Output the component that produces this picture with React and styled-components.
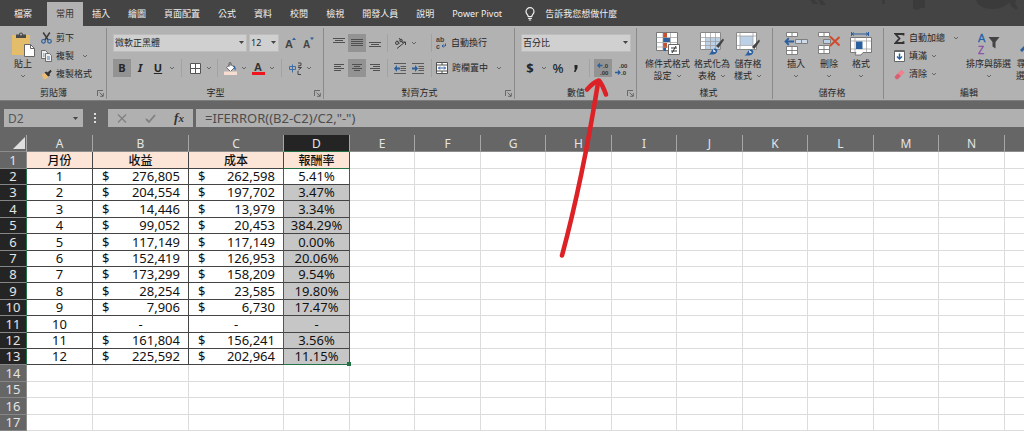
import React, { useEffect, useState } from 'react';
import styled, { createGlobalStyle, css } from 'styled-components';

const GlobalStyle = createGlobalStyle`
  *, *::before, *::after {
    box-sizing: border-box;
  }
  body {
    margin: 0;
    background: #fff;
    color: #262626;
    font-family: "Noto Sans", "Noto Sans CJK TC", sans-serif;
    font-size: 9px;
    line-height: 12px;
  }
  button, input, select {
    margin: 0;
    padding: 0;
    border: none;
    border-radius: 0;
    background: transparent;
    color: inherit;
    font: inherit;
  }
  svg {
    display: block;
    flex: none;
  }
`;

const Page = styled.div`
  position: relative;
  display: flex;
  flex-direction: column;
  height: 100vh;
  overflow: hidden;
`;

/* ---------- tabs ---------- */

const TabBar = styled.nav`
  display: flex;
  align-items: flex-end;
  height: 26px;
  padding-left: 5px;
  background: #444;
  color: #f0f0f0;
`;

const Tab = styled.button`
  height: 24px;
  padding: 0 9px;
  white-space: nowrap;
  ${props => props.$file && css`
    margin-right: 6px;
  `}
  ${props => props.$active && css`
    background: #b2b2b2;
    color: #333;
  `}
`;

const TellMe = styled.button`
  display: flex;
  align-items: center;
  gap: 10px;
  height: 24px;
  padding: 0 14px;
  white-space: nowrap;
`;

const TitleArt = styled.svg`
  align-self: flex-start;
  margin-left: auto;
`;

/* ---------- ribbon ---------- */

const RibbonBar = styled.div`
  display: flex;
  height: 75px;
  padding-top: 2px;
  background: #b2b2b2;
  border-bottom: 1px solid #7c7c7c;
  overflow: hidden;
`;

const Group = styled.section`
  display: flex;
  flex: none;
  flex-direction: column;
  justify-content: space-between;
  width: ${props => props.$width};
  margin-bottom: 1px;
  border-right: ${props => (props.$last ? 'none' : '1px solid #8a8a8a')};
`;

const GroupBody = styled.div`
  display: flex;
  gap: ${props => props.$gap || '0'};
  padding: 0 ${props => props.$pad || '6px'};
`;

const GroupFooter = styled.div`
  display: flex;
  align-items: center;
  height: 12px;
  padding: 0 2px 0 10px;
`;

const GroupName = styled.h2`
  flex: 1;
  margin: 0;
  font-size: 9px;
  font-weight: 400;
  text-align: center;
`;

const Stack = styled.div`
  display: flex;
  flex-direction: column;
  padding-top: 1px;
`;

const TwoRows = styled.div`
  display: flex;
  flex-direction: column;
  gap: 7px;
  padding-top: 6px;
`;

const Row = styled.div`
  display: flex;
  align-items: center;
  gap: ${props => props.$gap || '0'};
  width: ${props => props.$width || 'auto'};
  height: 18px;
`;

const SmallButton = styled.button`
  display: flex;
  align-items: center;
  gap: 4px;
  height: 18px;
  white-space: nowrap;
`;

const IconButton = styled.button`
  display: flex;
  align-items: center;
  justify-content: center;
  width: 18px;
  height: 18px;
  background: ${props => (props.$on ? '#939393' : 'transparent')};
`;

const ArrowButton = styled.button`
  display: flex;
  align-items: center;
  justify-content: center;
  width: 10px;
  height: 18px;
`;

const Divider = styled.span`
  width: 1px;
  height: 18px;
  margin: 0 ${props => (props.$tight ? '3px' : '4px')};
  background: #a2a2a2;
`;

const BigButton = styled.button`
  display: flex;
  flex: none;
  flex-direction: column;
  align-items: center;
  padding-top: 4px;
  white-space: nowrap;
`;

const BigLabel = styled.span`
  display: flex;
  align-items: center;
  justify-content: center;
  gap: 4px;
  min-height: 12px;
`;

const BigIcon = styled.span`
  display: flex;
  justify-content: center;
  height: 26px;
`;

const FormatLetter = styled.span`
  font-size: ${props => (props.$big ? '13px' : '11px')};
  line-height: 16px;
  font-weight: ${props => (props.$bold ? 700 : 500)};
  font-style: ${props => (props.$italic ? 'italic' : 'normal')};
  text-decoration: ${props => (props.$underline ? 'underline' : 'none')};
`;

const SelectBox = styled.label`
  position: relative;
  display: block;
  width: ${props => props.$width};
  height: 18px;
  svg {
    position: absolute;
    right: 3px;
    top: 7px;
    pointer-events: none;
  }
`;

const Select = styled.select`
  width: 100%;
  height: 100%;
  padding: 0 1px;
  appearance: none;
  background: #d0d0d0;
  border: 1px solid #bdbdbd;
`;

/* ---------- formula bar ---------- */

const FormulaRow = styled.div`
  display: flex;
  padding: 8px 0 8px 4px;
  background: #666;
`;

const NameBox = styled.label`
  display: flex;
  align-items: center;
  width: 79px;
  height: 18px;
  padding: 0 5px 0 4px;
  background: #b0b0b0;
  color: #555;
`;

const NameInput = styled.input`
  flex: 1;
  min-width: 0;
  font-size: 12px;
`;

const Grip = styled.svg`
  margin: 4px 11px;
`;

const FormulaTools = styled.div`
  display: flex;
  align-items: center;
  justify-content: space-around;
  width: 85px;
  height: 18px;
  background: #b0b0b0;
`;

const FunctionButton = styled.button`
  color: #333;
  font-family: "Liberation Serif", serif;
  font-size: 13px;
  font-style: italic;
  font-weight: 700;
  small {
    font-size: 11px;
  }
`;

const FormulaInput = styled.input`
  flex: 1;
  min-width: 0;
  height: 18px;
  margin-left: 3px;
  padding: 0 9px;
  background: #b0b0b0;
  color: #4c4c4c;
  font-size: 13px;
`;

/* ---------- sheet ---------- */

const SheetArea = styled.main`
  flex: 1;
  min-height: 0;
  overflow: hidden;
`;

const Sheet = styled.table`
  width: max-content;
  table-layout: fixed;
  border-collapse: separate;
  border-spacing: 0;
  font-size: 13px;
  line-height: 15px;
  color: #111;
`;

const Col = styled.col`
  width: ${props => props.$width}px;
`;

const SheetRow = styled.tr`
  height: 16px;
  &:nth-child(5n + 1), &:nth-child(5n + 4) {
    height: 17px;
  }
`;

const ColHead = styled.th`
  height: 17px;
  padding: 0;
  background: ${props => (props.$selected ? '#242424' : '#666')};
  border-right: 1px solid #a6a6a6;
  border-bottom: 1px solid ${props => (props.$selected ? '#217346' : '#8c8c8c')};
  color: #e4e4e4;
  font-size: 12px;
  font-weight: 400;
`;

const Corner = styled.th`
  padding: 0;
  background: #666;
  border-right: 1px solid #a6a6a6;
  border-bottom: 1px solid #8c8c8c;
  svg {
    margin: 0 1px 0 auto;
  }
`;

const RowHead = styled.th`
  padding: 0;
  background: ${props => (props.$selected ? '#242424' : '#666')};
  border-right: 1px solid ${props => (props.$selected ? '#217346' : '#8c8c8c')};
  border-bottom: 1px solid #868686;
  color: #e4e4e4;
  font-weight: 400;
`;

const lineColor = { plain: '#dcdcdc', dark: '#444', green: '#217346' };

const Cell = styled.td`
  position: relative;
  padding: 0;
  background: ${props => props.$fill || '#fff'};
  border-right: 1px solid ${props => lineColor[props.$right || 'plain']};
  border-bottom: 1px solid ${props => lineColor[props.$bottom || 'plain']};
  font-size: ${props => (props.$title ? '12px' : '13px')};
  font-weight: ${props => (props.$title ? 500 : 400)};
  text-align: center;
`;

const Money = styled.span`
  display: flex;
  justify-content: space-between;
  padding: 0 8px 0 9px;
`;

const FillHandle = styled.span`
  position: absolute;
  right: -2px;
  bottom: -2px;
  z-index: 1;
  width: 4px;
  height: 4px;
  background: #217346;
`;

const RedArrow = styled.svg`
  position: absolute;
  left: 550px;
  top: 70px;
  pointer-events: none;
`;

/* ---------- icons ---------- */

const IconText = styled.text`
  font-family: "Liberation Sans", sans-serif;
  font-size: ${props => props.$size}px;
  font-weight: ${props => (props.$bold ? 700 : 400)};
`;

const Chevron = () => (
  <svg width="6" height="4" viewBox="0 0 6 4" fill="none" stroke="#666">
    <path d="M1 1l2 2 2-2" />
  </svg>
);

const Caret = () => (
  <svg width="5" height="3" viewBox="0 0 5 3"><path d="M0 0h5L2.500 3z" fill="#444" /></svg>
);

const Launcher = () => (
  <svg width="7" height="7" viewBox="0 0 7 7" fill="none" stroke="#555" strokeWidth=".8">
    <path d="M.5 6V.5H6M2.500 2.500l3.500 3.500M6.300 3v3.300H3" />
  </svg>
);

const BulbIcon = () => (
  <svg width="10" height="14" viewBox="0 0 10 14" fill="none" stroke="#f0f0f0" strokeWidth="1.200">
    <path d="M3.200 9.500C3.200 7.700 1 7 1 4.700a4 4 0 0 1 8 0C9 7 6.800 7.700 6.800 9.500zM3.200 11.300h3.600M3.800 13h2.400" />
  </svg>
);

const PasteIcon = () => (
  <svg width="24" height="25" viewBox="0 0 24 25">
    <path d="M1 3h18v20H1z" fill="#e3bd6a" />
    <path d="M5 6V2.500h3a2 2 0 0 1 4 0h3V6z" fill="#4a4a4a" />
    <circle cx="10" cy="2.500" r="1" fill="#b2b2b2" />
    <path d="M13.500 12.500h6l4 4v8h-10z" fill="#fff" stroke="#666" />
    <path d="M19.500 12.500v4h4" fill="none" stroke="#666" />
  </svg>
);

const CutIcon = () => (
  <svg width="11" height="12" viewBox="0 0 11 12" fill="none">
    <path d="M2.200.5l5 7.500M8.800.5l-5 7.500" stroke="#3c3c3c" strokeWidth="1.500" />
    <circle cx="2.500" cy="9.300" r="1.800" stroke="#2b5f9e" strokeWidth="1.200" />
    <circle cx="8.500" cy="9.300" r="1.800" stroke="#2b5f9e" strokeWidth="1.200" />
  </svg>
);

const CopyIcon = () => (
  <svg width="11" height="12" viewBox="0 0 11 12" fill="#eee" stroke="#555" strokeWidth=".8">
    <path d="M.5.5h4l2 2v6h-6z" />
    <path d="M4.500 3.500h4l2 2v6h-6z" />
    <path d="M6 7h3M6 9h3M2 4h1.500M2 6h1.500" stroke="#2b5f9e" />
  </svg>
);

const BrushIcon = () => (
  <svg width="11" height="11" viewBox="0 0 11 11">
    <path d="M.5 5.500l4-1.500 3 4.500L3 10.500z" fill="#edbd72" />
    <path d="M3.500 3.500l2-1 1 1L9.500.8l1.200 1.400L8.500 5l.5 1.500-1.800 1z" fill="#333" />
  </svg>
);

const GrowFont = () => (
  <svg width="13" height="14" viewBox="0 0 13 14">
    <IconText x="1" y="12" $size={11} $bold fill="#444">A</IconText>
    <path d="M8 4l2-2.500L12 4z" fill="#2b5f9e" />
  </svg>
);

const ShrinkFont = () => (
  <svg width="13" height="14" viewBox="0 0 13 14">
    <IconText x="1" y="12" $size={10} $bold fill="#444">A</IconText>
    <path d="M8 1.500h4L10 4z" fill="#2b5f9e" />
  </svg>
);

const BorderIcon = () => (
  <svg width="11" height="11" viewBox="0 0 11 11">
    <path d="M.5.5h10v10H.5z" fill="#fff" stroke="#555" />
    <path d="M5.500 1v9M1 5.500h9" stroke="#555" />
  </svg>
);

const FillIcon = () => (
  <svg width="13" height="13" viewBox="0 0 13 13">
    <path d="M2.500 5.500l4-3.500 4 3.500-4 4z" fill="#fff" stroke="#555" strokeWidth=".8" />
    <path d="M5 5V1.500a1 1 0 0 1 2 0V4" fill="none" stroke="#555" strokeWidth=".8" />
    <path d="M9 3.500c2 0 3 1.500 2.600 5-1.200-.5-1.200-2.500-2.600-5z" fill="#2b5f9e" />
    <path d="M0 9.500h13V13H0z" fill="#f6ddd0" />
  </svg>
);

const FontColorIcon = () => (
  <svg width="13" height="14" viewBox="0 0 13 14">
    <IconText x="2" y="10" $size={11} $bold fill="#333">A</IconText>
    <path d="M0 11h13v3H0z" fill="#f0141c" />
  </svg>
);

const PhoneticIcon = () => (
  <svg width="13" height="13" viewBox="0 0 13 13">
    <path d="M.5 4.500h6v3h-6zM3.500 2.500v8" fill="none" stroke="#3d6da6" />
    <path d="M9 1h3v2.500M9 4l3-.5M9 5.500h3.500L9.500 8M9 9v3.500h3" fill="none" stroke="#444" />
  </svg>
);

// horizontal bars, one [x, width] pair per line
const Lines = ({ bars, size = 12, top = 2 }) => (
  <svg width={size} height="12" viewBox={`0 0 ${size} 12`} fill="#505050">
    {bars.map(([x, w], i) => <rect key={i} x={x} y={top + i * 2} width={w} height="1" />)}
  </svg>
);

const OrientationIcon = () => (
  <svg width="13" height="12" viewBox="0 0 13 12" fill="none" stroke="#404040">
    <circle cx="3" cy="6" r="1.500" />
    <path d="M3 3.500l2.500 3M5 1l4 5" />
    <circle cx="7" cy="3.500" r="1.300" />
    <path d="M3 11.500l8-6.500M8.500 5h3v3" />
  </svg>
);

const IndentIcon = ({ right }) => (
  <svg width="12" height="11" viewBox="0 0 12 11">
    <path d="M0 .5h12M6.500 3.500H12M6.500 5.500H12M6.500 7.500H12M0 10.500h12" stroke="#5a5a5a" />
    <path d={right ? 'M6 5.500L3 2v2.500H0v2h3V9z' : 'M0 5.500L3 2v2.500h3v2H3V9z'} fill="#2b5f9e" />
  </svg>
);

const WrapIcon = () => (
  <svg width="11" height="14" viewBox="0 0 11 14">
    <IconText x="0" y="6" $size={7} $bold fill="#444">ab</IconText>
    <IconText x="0" y="13" $size={7} $bold fill="#444">c</IconText>
    <path d="M9.500 7.500V10H6M7.500 8.500L6 10l1.500 1.500" fill="none" stroke="#2b5f9e" />
  </svg>
);

const MergeIcon = () => (
  <svg width="12" height="12" viewBox="0 0 12 12">
    <path d="M.5.5h11v11H.5z" fill="#fff" stroke="#505050" />
    <path d="M.5 3h11M.5 9h11M6 .5V3M6 9v2.500" stroke="#505050" />
    <path d="M2.500 6h7M4 4.500L2.500 6 4 7.500M8 4.500L9.500 6 8 7.500" fill="none" stroke="#2b5f9e" />
  </svg>
);

const DecimalIcon = ({ more }) => (
  <svg width="14" height="15" viewBox="0 0 14 15" fill="#333">
    <IconText x={more ? 7 : 5} y="7" $size={6} $bold>{more ? '.0' : '.00'}</IconText>
    <IconText x={more ? 4 : 7} y="14" $size={6} $bold>{more ? '.00' : '.0'}</IconText>
    {more
      ? <path d="M6.500 4.500H2M4 2.500l-2 2 2 2" fill="none" stroke="#2b5f9e" strokeWidth="1.300" />
      : <path d="M1 11.500h5M4 9.500l2 2-2 2" fill="none" stroke="#2b5f9e" strokeWidth="1.300" />}
  </svg>
);

const ConditionalIcon = () => (
  <svg width="24" height="23" viewBox="0 0 24 23">
    <path d="M.5.500h21v18H.5z" fill="#fff" stroke="#777" />
    <path d="M7 1h4v5H7zM7 11h4v5H7z" fill="#c8502e" />
    <path d="M7 6h7v4H7zM7 16h3v3H7z" fill="#2b5f9e" />
    <path d="M.5 5.500h21M.5 10.500h21M.5 15h21M7 1v18M14.500 1v18" stroke="#999" strokeWidth=".7" fill="none" />
    <path d="M12.500 12.500h11v10h-11z" fill="#fff" stroke="#666" />
    <path d="M15 16h6M15 19h6M20 14l-4 7" stroke="#333" />
  </svg>
);

const FormatTableIcon = () => (
  <svg width="24" height="23" viewBox="0 0 24 23">
    <path d="M.5.500h20v17H.5z" fill="#fff" stroke="#888" />
    <path d="M6 6h14v11H6z" fill="#bcd0e6" />
    <path d="M.5 5.500h20M.5 9.500h20M.5 13.500h20M5.500 1v16M10.500 1v16M15.500 1v16" stroke="#999" strokeWidth=".7" fill="none" />
    <path d="M23 6.500l1 1.500-5.500 8-2.500-2z" fill="#444" />
    <path d="M8 22.500c3 0 3-5 6.500-6 2 0 3.500 1.500 2.500 3.500-.7 1.500-2 2.500-4 2.500z" fill="#2b5f9e" />
    <path d="M13 17l3 2.500-2.500.5z" fill="#fff" />
  </svg>
);

const CellStyleIcon = () => (
  <svg width="24" height="24" viewBox="0 0 24 24">
    <path d="M.5.500h20v17H.5z" fill="#fff" stroke="#888" />
    <path d="M4 4h13v9H4z" fill="#bcd0e6" />
    <path d="M.5 4h20M.5 13.500h20M4 1v17M17 1v17" stroke="#999" strokeWidth=".7" fill="none" />
    <path d="M23 7.500l1 1.500-5.500 8-2.500-2z" fill="#444" />
    <path d="M8 23.500c3 0 3-5 6.500-6 2 0 3.500 1.500 2.500 3.500-.7 1.500-2 2.500-4 2.500z" fill="#2b5f9e" />
    <path d="M13 18l3 2.500-2.500.5z" fill="#fff" />
  </svg>
);

const InsertIcon = () => (
  <svg width="24" height="23" viewBox="0 0 24 23" fill="#fff" stroke="#777" strokeWidth=".9">
    <path d="M2.500.500h11v4h-11zM8 .5v4M2.500 14.500h11v8h-11zM8 14.500v8M2.500 18.500h11" />
    <path d="M11.500 7.500h12v4h-12zM17.500 7.500v4" fill="#cddbea" />
    <path d="M10 9.500H1.500M4.800 6.200L1.500 9.500l3.300 3.300" fill="none" stroke="#2b5f9e" strokeWidth="1.800" />
  </svg>
);

const DeleteIcon = () => (
  <svg width="24" height="23" viewBox="0 0 24 23" fill="#fff" stroke="#777" strokeWidth=".9">
    <path d="M1.500.500h11v4h-11zM7 .5v4M1.500 13.500h11v8h-11zM7 13.500v8M1.500 17.500h11" />
    <path d="M6.500 7.500h7v4h-7z" fill="#bcd0e6" />
    <path d="M13 4.500l9.500 9M22.500 5l-9.500 9" fill="none" stroke="#d0492b" strokeWidth="1.900" />
  </svg>
);

const FormatIcon = () => (
  <svg width="22" height="24" viewBox="0 0 22 24">
    <path d="M2 2h16M4 .5L2 2l2 1.500M16 .5L18 2l-2 1.500M1.500 0v4M18.500 0v4" fill="none" stroke="#2b5f9e" />
    <path d="M.5 5.500h21v15H13l-2 2.500H5l1-2.500H.5z" fill="#fff" stroke="#777" />
    <path d="M.5 9h21M.5 17h21M5 5.500v15M16.500 5.500v15" stroke="#999" strokeWidth=".7" fill="none" />
    <path d="M6 9.500h6.500V17H6z" fill="#2b5f9e" />
  </svg>
);

const SigmaIcon = () => (
  <svg width="11" height="11" viewBox="0 0 11 11" fill="none" stroke="#333" strokeWidth="1.800">
    <path d="M9.500 2.500V1H1.500l4 4.500-4 4.500h8V8.300" />
  </svg>
);

const FillDownIcon = () => (
  <svg width="11" height="12" viewBox="0 0 11 12">
    <path d="M.5.500h10v11H.5z" fill="#fff" stroke="#666" />
    <path d="M.5 1.500h10" stroke="#666" />
    <path d="M5.500 3.500v5.500M3 6.500L5.500 9 8 6.500" fill="none" stroke="#2b5f9e" strokeWidth="1.500" />
  </svg>
);

const EraserIcon = () => (
  <svg width="11" height="11" viewBox="0 0 11 11">
    <path d="M7.500.8L10.500 3.500 7 7 3.500 4.500z" fill="#f0808c" />
    <path d="M3.500 4.500L7 7 3.700 10.200H2L.5 8z" fill="#dc5c70" />
  </svg>
);

const SortIcon = () => (
  <svg width="22" height="24" viewBox="0 0 22 24">
    <IconText x="0" y="10" $size={11} fill="#1f62ab" stroke="#1f62ab" strokeWidth=".3">A</IconText>
    <IconText x="0" y="22" $size={10} fill="#8a4fa8" stroke="#8a4fa8" strokeWidth=".3">Z</IconText>
    <path d="M10.500 5h11l-4 5v6.500l-3-2V10z" fill="#444" />
  </svg>
);

const FindIcon = () => (
  <svg width="20" height="23" viewBox="0 0 20 23" fill="none" stroke="#2b5f9e">
    <circle cx="12" cy="8" r="6" strokeWidth="2" />
    <path d="M7.500 12.500L1 19" strokeWidth="3" />
  </svg>
);

/* ---------- data ---------- */

const tabs = ['插入', '繪圖', '頁面配置', '公式', '資料', '校閱', '檢視', '開發人員', '說明', 'Power Pivot'];

const letters = 'ABCDEFGHIJKLMNOPQRSTUVWXYZ'.split('');
const firstWidths = [66, 96, 95, 66];
const columnWidth = i => firstWidths[i] || (i % 2 ? 66 : 65);

const records = [
  ['1', '276,805', '262,598', '5.41%'],
  ['2', '204,554', '197,702', '3.47%'],
  ['3', '14,446', '13,979', '3.34%'],
  ['4', '99,052', '20,453', '384.29%'],
  ['5', '117,149', '117,149', '0.00%'],
  ['6', '152,419', '126,953', '20.06%'],
  ['7', '173,299', '158,209', '9.54%'],
  ['8', '28,254', '23,585', '19.80%'],
  ['9', '7,906', '6,730', '17.47%'],
  ['10', '-', '-', '-'],
  ['11', '161,804', '156,241', '3.56%'],
  ['12', '225,592', '202,964', '11.15%'],
];

// how much of the grid is needed to cover the window
const gridSize = () => ({
  rows: Math.max(13, Math.ceil((window.innerHeight - 152) / 17)),
  cols: Math.min(26, Math.max(5, 5 + Math.ceil((window.innerWidth - 416) / 66))),
});

const RibbonGroup = ({ name, width, pad, gap, launcher, last, children }) => (
  <Group $width={width} $last={last}>
    <GroupBody $pad={pad} $gap={gap}>{children}</GroupBody>
    <GroupFooter>
      <GroupName>{name}</GroupName>
      {launcher && <button type="button" aria-label={name}><Launcher /></button>}
    </GroupFooter>
  </Group>
);

const Big = ({ icon, lines, arrow }) => (
  <BigButton type="button">
    <BigIcon>{icon}</BigIcon>
    <BigLabel>{lines[0]}</BigLabel>
    <BigLabel>{lines[1]}{arrow && <Chevron />}</BigLabel>
  </BigButton>
);

const Arrow = ({ label }) => (
  <ArrowButton type="button" aria-label={label}><Chevron /></ArrowButton>
);

const Ribbon = () => (
  <RibbonBar>
    <RibbonGroup name="剪貼簿" width="107px" pad="11px" gap="6px" launcher>
      <Big icon={<PasteIcon />} lines={['貼上', '']} arrow />
      <Stack>
        <SmallButton type="button"><CutIcon />剪下</SmallButton>
        <Row $gap="6px">
          <SmallButton type="button"><CopyIcon />複製</SmallButton>
          <Arrow label="複製選項" />
        </Row>
        <SmallButton type="button"><BrushIcon />複製格式</SmallButton>
      </Stack>
    </RibbonGroup>

    <RibbonGroup name="字型" width="217px" launcher>
      <TwoRows>
        <Row $gap="2px">
          <SelectBox $width="134px">
            <Select aria-label="字型" defaultValue="微軟正黑體"><option>微軟正黑體</option></Select>
            <Caret />
          </SelectBox>
          <SelectBox $width="30px">
            <Select aria-label="字型大小" defaultValue="12"><option>12</option></Select>
            <Caret />
          </SelectBox>
          <Row>
            <IconButton type="button" aria-label="放大字型"><GrowFont /></IconButton>
            <IconButton type="button" aria-label="縮小字型"><ShrinkFont /></IconButton>
          </Row>
        </Row>
        <Row>
          <IconButton type="button" $on><FormatLetter $bold>B</FormatLetter></IconButton>
          <IconButton type="button"><FormatLetter $bold $italic>I</FormatLetter></IconButton>
          <IconButton type="button"><FormatLetter $bold $underline>U</FormatLetter></IconButton>
          <Arrow label="底線" />
          <Divider />
          <IconButton type="button" aria-label="框線"><BorderIcon /></IconButton>
          <Arrow label="框線選項" />
          <Divider $tight />
          <IconButton type="button" aria-label="填滿色彩"><FillIcon /></IconButton>
          <Arrow label="填滿色彩選項" />
          <IconButton type="button" aria-label="字型色彩"><FontColorIcon /></IconButton>
          <Arrow label="字型色彩選項" />
          <Divider />
          <IconButton type="button" aria-label="注音"><PhoneticIcon /></IconButton>
          <Arrow label="注音選項" />
        </Row>
      </TwoRows>
    </RibbonGroup>

    <RibbonGroup name="對齊方式" width="191px" launcher>
      <TwoRows>
        <Row>
          <IconButton type="button" aria-label="靠上"><Lines top={1} bars={[[0, 12], [2, 8], [0, 12]]} /></IconButton>
          <IconButton type="button" aria-label="置中對齊" $on><Lines bars={[[0, 12], [0, 12], [0, 12], [0, 12]]} /></IconButton>
          <IconButton type="button" aria-label="靠下"><Lines top={5} bars={[[0, 12], [2, 8], [0, 12]]} /></IconButton>
          <Divider $tight />
          <Row $width="36px">
            <IconButton type="button" aria-label="方向"><OrientationIcon /></IconButton>
            <Arrow label="方向選項" />
          </Row>
          <Divider />
          <SmallButton type="button"><WrapIcon />自動換行</SmallButton>
        </Row>
        <Row>
          <IconButton type="button" aria-label="靠左"><Lines size={10} bars={[[0, 10], [0, 7], [0, 10], [0, 7]]} /></IconButton>
          <IconButton type="button" aria-label="置中" $on><Lines size={10} bars={[[0, 10], [2, 6], [0, 10], [2, 6]]} /></IconButton>
          <IconButton type="button" aria-label="靠右"><Lines size={10} bars={[[0, 10], [3, 7], [0, 10], [3, 7]]} /></IconButton>
          <Divider $tight />
          <IconButton type="button" aria-label="減少縮排"><IndentIcon /></IconButton>
          <IconButton type="button" aria-label="增加縮排"><IndentIcon right /></IconButton>
          <Divider />
          <Row $gap="6px">
            <SmallButton type="button"><MergeIcon />跨欄置中</SmallButton>
            <Arrow label="跨欄置中選項" />
          </Row>
        </Row>
      </TwoRows>
    </RibbonGroup>

    <RibbonGroup name="數值" width="122px" launcher>
      <TwoRows>
        <SelectBox $width="110px">
          <Select aria-label="數值格式" defaultValue="百分比"><option>百分比</option></Select>
          <Caret />
        </SelectBox>
        <Row>
          <IconButton type="button"><FormatLetter $big $bold>$</FormatLetter></IconButton>
          <Arrow label="會計格式" />
          <IconButton type="button"><FormatLetter $big>%</FormatLetter></IconButton>
          <IconButton type="button" aria-label="千分位樣式">
            <svg width="4" height="7" viewBox="0 0 4 7"><path d="M.5 0H3.500v3L1.500 7H0l1-3.500H.5z" fill="#262626" /></svg>
          </IconButton>
          <Divider />
          <IconButton type="button" aria-label="增加小數位數" $on><DecimalIcon more /></IconButton>
          <IconButton type="button" aria-label="減少小數位數"><DecimalIcon /></IconButton>
        </Row>
      </TwoRows>
    </RibbonGroup>

    <RibbonGroup name="樣式" width="136px" pad="8px" gap="4px">
      <Big icon={<ConditionalIcon />} lines={['條件式格式', '設定']} arrow />
      <Big icon={<FormatTableIcon />} lines={['格式化為', '表格']} arrow />
      <Big icon={<CellStyleIcon />} lines={['儲存格', '樣式']} arrow />
    </RibbonGroup>

    <RibbonGroup name="儲存格" width="111px" pad="11px" gap="9px">
      <Big icon={<InsertIcon />} lines={['插入', '']} arrow />
      <Big icon={<DeleteIcon />} lines={['刪除', '']} arrow />
      <Big icon={<FormatIcon />} lines={['格式', '']} arrow />
    </RibbonGroup>

    <RibbonGroup name="編輯" width="162px" pad="10px" gap="5px" last>
      <Stack>
        <Row $gap="6px">
          <SmallButton type="button"><SigmaIcon />自動加總</SmallButton>
          <Arrow label="自動加總選項" />
        </Row>
        <SmallButton type="button"><FillDownIcon />填滿<Chevron /></SmallButton>
        <SmallButton type="button"><EraserIcon />清除<Chevron /></SmallButton>
      </Stack>
      <Big icon={<SortIcon />} lines={['排序與篩選', '']} arrow />
      <Big icon={<FindIcon />} lines={['尋找與', '選取']} arrow />
    </RibbonGroup>
  </RibbonBar>
);

const FormulaBar = ({ formula, onChange }) => (
  <FormulaRow>
    <NameBox>
      <NameInput aria-label="名稱方塊" defaultValue="D2" />
      <Caret />
    </NameBox>
    <Grip width="3" height="10" viewBox="0 0 3 10" fill="#ddd">
      <path d="M0 0h2v2H0zM0 4h2v2H0zM0 8h2v2H0z" />
    </Grip>
    <FormulaTools>
      <button type="button" aria-label="取消">
        <svg width="10" height="9" viewBox="0 0 10 9" fill="none" stroke="#808080" strokeWidth="1.300"><path d="M1 .5l8 8M9 .5l-8 8" /></svg>
      </button>
      <button type="button" aria-label="輸入">
        <svg width="11" height="9" viewBox="0 0 11 9" fill="none" stroke="#808080" strokeWidth="1.800"><path d="M1 5l3 3 6-7" /></svg>
      </button>
      <FunctionButton type="button">f<small>x</small></FunctionButton>
    </FormulaTools>
    <FormulaInput aria-label="公式" value={formula} onChange={onChange} />
  </FormulaRow>
);

const DataCell = ({ row, col }) => {
  if (row > 13 || col > 3) {
    return <Cell />;
  }
  if (row === 1) {
    return (
      <Cell $title $fill="#fce4d6" $right="dark" $bottom={col === 3 ? 'green' : 'dark'}>
        {['月份', '收益', '成本', '報酬率'][col]}
      </Cell>
    );
  }
  const value = records[row - 2][col];
  const isMoney = (col === 1 || col === 2) && value !== '-';
  return (
    <Cell
      $fill={col === 3 && row > 2 ? '#c6c6c6' : '#fff'}
      $right={col > 1 ? 'green' : 'dark'}
      $bottom={col === 3 && row === 13 ? 'green' : 'dark'}
    >
      {isMoney ? <Money><span>$</span><span>{value}</span></Money> : value}
      {col === 3 && row === 13 && <FillHandle />}
    </Cell>
  );
};

const Spreadsheet = () => {
  const [size, setSize] = useState(gridSize);

  useEffect(() => {
    const handleResize = () => setSize(gridSize());
    window.addEventListener('resize', handleResize);
    return () => window.removeEventListener('resize', handleResize);
  }, []);

  const columns = letters.slice(0, size.cols);

  return (
    <SheetArea>
      <Sheet>
        <colgroup>
          <Col $width={27} />
          {columns.map((name, i) => <Col key={name} $width={columnWidth(i)} />)}
        </colgroup>
        <thead>
          <tr>
            <Corner>
              <svg width="12" height="12" viewBox="0 0 12 12"><path d="M12 0v12H0z" fill="#e0e0e0" /></svg>
            </Corner>
            {columns.map(name => <ColHead key={name} $selected={name === 'D'}>{name}</ColHead>)}
          </tr>
        </thead>
        <tbody>
          {Array.from({ length: size.rows }, (_, i) => i + 1).map(row => (
            <SheetRow key={row}>
              <RowHead $selected={row > 1 && row < 14}>{row}</RowHead>
              {columns.map((name, col) => <DataCell key={name} row={row} col={col} />)}
            </SheetRow>
          ))}
        </tbody>
      </Sheet>
    </SheetArea>
  );
};

const App = () => {
  const [formula, setFormula] = useState('=IFERROR((B2-C2)/C2,"-")');

  return (
    <Page>
      <GlobalStyle />
      <TabBar>
        <Tab type="button" $file>檔案</Tab>
        <Tab type="button" $active>常用</Tab>
        {tabs.map(tab => <Tab type="button" key={tab}>{tab}</Tab>)}
        <TellMe type="button"><BulbIcon />告訴我您想做什麼</TellMe>
        <TitleArt width="214" height="12" viewBox="0 0 214 12" fill="#3b3b3b">
          <path d="M0 0h5l3 4H3zM8 0h4l4 5h-5zM72 0h3v4h-3zM103 0h12v8h-4l-3 2-5-1z" />
          <path d="M166 0h34c-2 6-10 9-18 9s-14-3-16-9zM198 0h8l-1 4 3 4-2 2-5-4z" />
        </TitleArt>
      </TabBar>
      <Ribbon />
      <FormulaBar formula={formula} onChange={event => setFormula(event.target.value)} />
      <Spreadsheet />
      <RedArrow width="70" height="195" viewBox="0 0 70 195" fill="none" stroke="#dc2226" strokeLinecap="round" strokeLinejoin="round">
        <path d="M12 185.500C27 130 38 75 48 13" strokeWidth="4.600" />
        <path d="M37 19.500C41 15 44 12 49 10.500C52 14 54 19 56 24.500" strokeWidth="4.600" />
      </RedArrow>
    </Page>
  );
};

export default App;
